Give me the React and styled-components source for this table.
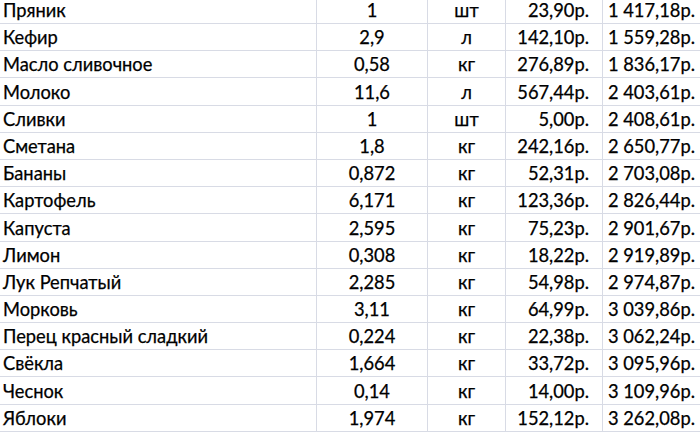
import React from "react";
import styled, { createGlobalStyle } from "styled-components";

const Global = createGlobalStyle`
  html, body { margin: 0; padding: 0; background: #fff; overflow: hidden; }
  body { font-family: "Lato", "Liberation Sans", sans-serif; }
`;

const Sheet = styled.div`
  width: 700px;
  height: 433px;
  overflow: hidden;
  background: #fff;
`;

const Table = styled.div`
  display: grid;
  grid-template-columns: 317px 111px 78px 97px 110px;
  grid-auto-rows: 27.2px;
  margin-top: -3.2px;
  width: 713px;
`;

const Cell = styled.div`
  border-right: 1px solid #d8dbe5;
  border-bottom: 1px solid #d8dbe5;
  display: flex;
  align-items: flex-end;
  justify-content: ${(p) => (p.$align === "center" ? "center" : p.$align === "right" ? "flex-end" : "flex-start")};
  padding: 0 ${(p) => p.$pr || 0}px 2px ${(p) => p.$pl || 0}px;
  font-size: 18.3px;
  line-height: 22px;
  color: #000;
  -webkit-text-stroke: 0.25px #000;
  white-space: nowrap;
  box-sizing: border-box;
  overflow: hidden;
`;

const rows = [
  ["Пряник", "1", "шт", "23,90р.", "1 417,18р."],
  ["Кефир", "2,9", "л", "142,10р.", "1 559,28р."],
  ["Масло сливочное", "0,58", "кг", "276,89р.", "1 836,17р."],
  ["Молоко", "11,6", "л", "567,44р.", "2 403,61р."],
  ["Сливки", "1", "шт", "5,00р.", "2 408,61р."],
  ["Сметана", "1,8", "кг", "242,16р.", "2 650,77р."],
  ["Бананы", "0,872", "кг", "52,31р.", "2 703,08р."],
  ["Картофель", "6,171", "кг", "123,36р.", "2 826,44р."],
  ["Капуста", "2,595", "кг", "75,23р.", "2 901,67р."],
  ["Лимон", "0,308", "кг", "18,22р.", "2 919,89р."],
  ["Лук Репчатый", "2,285", "кг", "54,98р.", "2 974,87р."],
  ["Морковь", "3,11", "кг", "64,99р.", "3 039,86р."],
  ["Перец красный сладкий", "0,224", "кг", "22,38р.", "3 062,24р."],
  ["Свёкла", "1,664", "кг", "33,72р.", "3 095,96р."],
  ["Чеснок", "0,14", "кг", "14,00р.", "3 109,96р."],
  ["Яблоки", "1,974", "кг", "152,12р.", "3 262,08р."],
];

export default function App() {
  return (
    <Sheet>
      <Global />
      <Table>
        {rows.map((r, i) => (
          <React.Fragment key={i}>
            <Cell $pl={3}>{r[0]}</Cell>
            <Cell $align="center">{r[1]}</Cell>
            <Cell $align="center">{r[2]}</Cell>
            <Cell $align="right" $pr={13}>{r[3]}</Cell>
            <Cell $align="right" $pr={17}>{r[4]}</Cell>
          </React.Fragment>
        ))}
      </Table>
    </Sheet>
  );
}
